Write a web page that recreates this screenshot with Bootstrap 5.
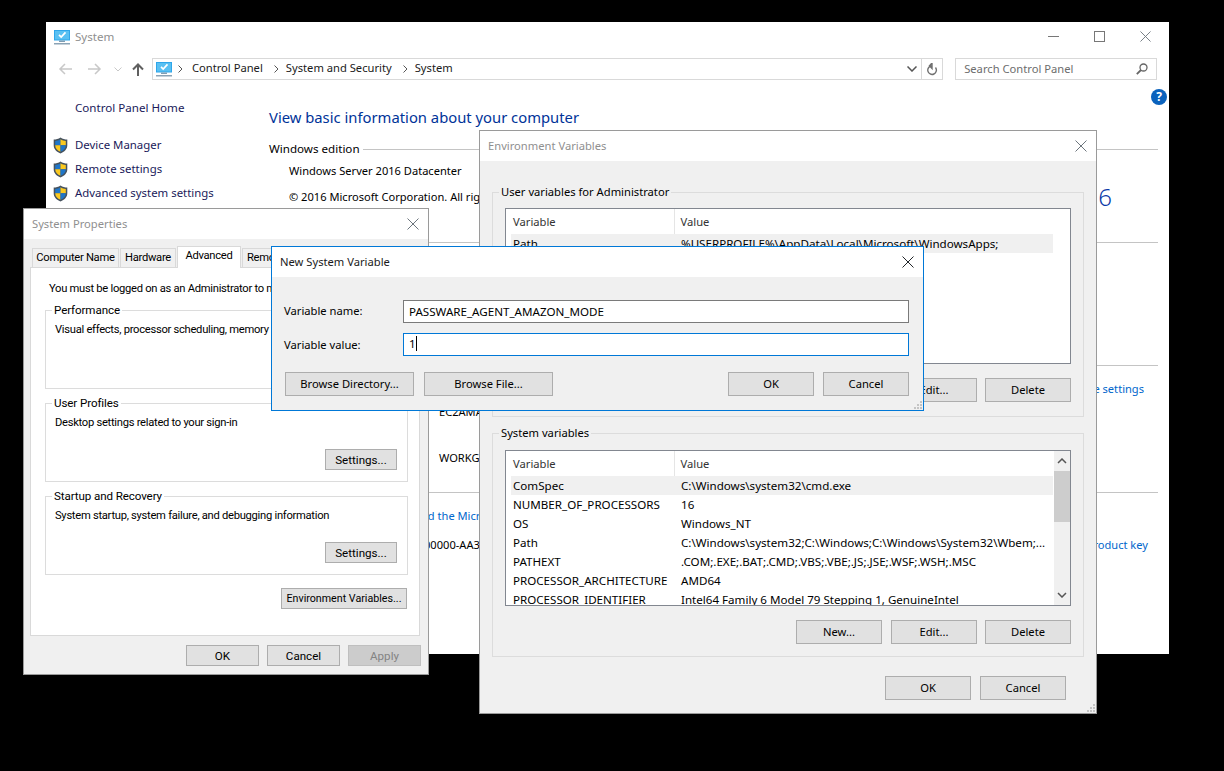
<!DOCTYPE html>
<html lang="en">

<head>
    <meta charset="UTF-8">
    <meta name="viewport" content="width=device-width, initial-scale=1.0">
    <title>System - Environment Variables</title>
    <link href="https://cdn.jsdelivr.net/npm/bootstrap@5.3.0/dist/css/bootstrap.min.css" rel="stylesheet">
    <style>
        html, body { height: 100%; }

        body {
            margin: 0;
            background-color: #000;
            overflow: hidden;
            color: #000;
            font-family: "Noto Sans", "Open Sans", sans-serif;
            font-size: 11.6px;
            line-height: 16px;
        }

        /* windows on the desktop */
        .win {
            position: absolute;
            display: flex;
            flex-direction: column;
            background-color: #fff;
            overflow: hidden;
        }

        .win-system { left: 46px; top: 22px; width: 1123px; height: 632px; z-index: 1; }
        .win-env { left: 479px; top: 130px; width: 618px; height: 584px; border: 1px solid #9a9a9a; z-index: 2; }
        .win-props { left: 23px; top: 208px; width: 406px; height: 467px; border: 1px solid #9a9a9a; z-index: 3; }
        .win-new { left: 271px; top: 246px; width: 653px; height: 165px; border: 1px solid #0078d7; z-index: 4; }

        .win-head {
            flex: 0 0 30px;
            display: flex;
            align-items: center;
            justify-content: space-between;
            padding: 0 8px;
            color: #8f8f8f;
            font-size: 11.2px;
        }

        .win-new .win-head { color: #1a1a1a; }
        .win-body { flex: 1 1 auto; min-height: 0; background-color: #f0f0f0; display: flex; flex-direction: column; }

        .x-icon { display: block; margin-right: 1px; }

        /* plain windows buttons */
        .btn.w-btn {
            width: 86px;
            height: 24px;
            padding: 0;
            border: 1px solid #adadad;
            border-radius: 0;
            background-color: #e1e1e1;
            color: #000;
            font-size: 11.2px;
            line-height: 20px;
            white-space: nowrap;
        }

        .btn.w-btn.sm { width: 73px; height: 21px; line-height: 18px; font-size: 11.6px; }
        .btn.w-btn.off { background-color: #cccccc; border-color: #bfbfbf; color: #838383; opacity: 1; }

        /* group boxes */
        fieldset.grp { border: 1px solid #dcdcdc; display: flex; flex-direction: column; flex: none; }
        fieldset.grp legend {
            float: none;
            width: auto;
            margin: 0 0 0 -6px;
            padding: 0 2px;
            font-size: 11.2px;
            line-height: 16px;
        }

        /* system window */
        .sys-head { flex: 0 0 30px; display: flex; align-items: center; padding: 0 18px 0 8px; color: #8f8f8f; }
        .sys-head .sys-name { margin-left: 5px; flex-grow: 1; }
        .caption-btns { display: flex; align-items: center; gap: 35px; margin-top: -1px; }

        .tool-row { flex: 0 0 28px; display: flex; padding: 6px 12px 0 8px; }
        .tool-arrows { width: 98px; display: flex; align-items: center; color: #c8c8c8; }
        .arrow-down { margin-left: 12px; }
        .arrow-up { margin-left: 10px; }
        .addr-box, .find-box { height: 22px; border: 1px solid #d9d9d9; display: flex; align-items: center; font-size: 11.2px; }
        .addr-box { width: 792px; }
        .addr-box .pc-icon { margin: 0 6px 0 3px; }
        .addr-box .crumb { margin: 0 11px 2px 0; color: #1a1a1a; white-space: nowrap; }
        .addr-box .chev { margin: 0 7px 1px 0; }
        .addr-box .chev.first { margin-right: 9px; }
        .addr-end { margin-left: auto; display: flex; align-items: center; height: 100%; }
        .addr-refresh { width: 21px; height: 100%; border-left: 1px solid #d9d9d9; display: flex; align-items: center; justify-content: center; }
        .find-box { width: 202px; margin-left: 12px; padding: 0 8px; color: #6d6d6d; justify-content: space-between; }

        .sys-main { flex: 1 1 auto; display: flex; min-height: 0; position: relative; padding-top: 16px; }
        .side-col { flex: 0 0 223px; font-size: 11.4px; }
        .side-home { line-height: 24px; padding-left: 29px; color: #1a1a5a; font-size: 11.6px; }
        .side-link { height: 24px; display: flex; align-items: center; padding-left: 7px; gap: 7px; color: #1a1a5a; }
        .side-links { margin-top: 13px; }
        .info-col { flex: 1 1 auto; padding-right: 11px; min-width: 0; }
        .info-title { font-size: 14.8px; line-height: 24px; color: #003399; margin: 9px 0 10px; }
        .info-sec { display: flex; flex-direction: column; }
        .sec-edition { height: 93px; }
        .sec-system { height: 123px; }
        .sec-name { height: 127px; }
        .sec-head { height: 20px; display: flex; align-items: center; gap: 3px; white-space: nowrap; flex: none; }
        .sec-head::after { content: ""; flex-grow: 1; height: 1px; background-color: #c4c4c4; margin-top: 1px; }
        .info-line { padding-left: 20px; height: 24px; display: flex; align-items: center; white-space: nowrap; font-size: 11.1px; }
        .info-line.copy-line { margin-top: 2px; }
        .info-line.name-row { height: 23px; }
        .info-line.name-row.first { margin-top: 2px; }
        .info-line.terms-row { margin-top: 2px; }
        .info-line.terms-row .blue-link { margin-left: 5px; }
        .info-line.key-row { margin-top: 5px; padding-left: 23px; }
        .info-label { width: 150px; flex: none; }
        .brand-text { margin-left: auto; margin-right: 48.5px; font-size: 24px; font-weight: 300; color: #0a3aa8; letter-spacing: -2.5px; }
        .blue-link { color: #0066cc; }
        .far-end { margin-left: auto; margin-right: 14px; }
        .key-row .far-end { margin-right: 10px; }
        .help-dot {
            position: absolute;
            right: 2px;
            top: 9px;
            width: 16px;
            height: 16px;
            border-radius: 50%;
            background-color: #0a62bd;
            color: #fff;
            font-weight: 700;
            font-size: 12px;
            line-height: 16px;
            text-align: center;
        }

        /* environment variables */
        .env-body { padding: 23px 12px 0 12px; }
        .grp-user { height: 233px; padding: 0 12px 0 12px; margin-bottom: 8px; }
        .grp-sys { height: 232px; padding: 0 12px 0 12px; }
        .var-box {
            margin-top: 8px;
            flex: 0 0 156px;
            display: flex;
            border: 1px solid #828790;
            background-color: #fff;
            padding-left: 5px;
            overflow: hidden;
        }
        .grp-sys .var-box { margin-top: 9px; }
        .var-table.table { width: 542px; flex: none; table-layout: fixed; margin: 0; align-self: flex-start; font-size: 11.6px; }
        .var-table.table > :not(caption) > * > * { padding: 0 0 0 2px; height: 19px; line-height: 16px; white-space: nowrap; overflow: hidden; border: 0; box-shadow: none; background: none; color: #000; vertical-align: middle; }
        .var-table.table > thead > tr > th { height: 25px; font-weight: 400; color: #333; font-size: 11.2px; }
        .var-table.table > thead > tr > th:first-child { width: 163px; }
        .var-table.table > thead > tr > th:nth-child(2) { border-left: 1px solid #e5e5e5; padding-left: 6px; }
        .var-table.table > tbody > tr > td:nth-child(2) { padding-left: 7px; }
        .var-table.table > tbody > tr.picked > td { background-color: #f0f0f0; }
        .var-scroll { flex: 0 0 16px; margin-left: 1px; background-color: #f0f0f0; display: flex; flex-direction: column; align-items: center; }
        .var-scroll .thumb { width: 100%; height: 51px; background-color: #cdcdcd; }
        .var-scroll svg { flex: none; margin: 7px 0; }
        .var-scroll .mid { flex-grow: 1; }
        .grp-btns { display: flex; justify-content: flex-end; gap: 8px; margin-top: auto; }
        .env-btns { margin: 14px 0 0 0; }
        .env-btns .btn:first-child { margin-right: 1px; }
        .env-foot { display: flex; justify-content: flex-end; gap: 9px; padding: 19px 18px 0 0; }
        .grip { position: absolute; right: 1px; bottom: 1px; }

        /* system properties, the old dialog font runs narrower */
        .win-props .win-body { font-family: Roboto, sans-serif; font-size: 11.2px; letter-spacing: -.28px; }
        .props-body { padding: 9px 9px 8px 6px; }
        .nav.prop-tabs { flex-wrap: nowrap; margin-left: 2px; border: 0; height: 19px; position: relative; z-index: 1; }
        .nav.prop-tabs .nav-link {
            height: 19px;
            padding: 0;
            margin: 0 1px 0 0;
            background-color: #f0f0f0;
            border: 1px solid #d9d9d9;
            border-bottom: 0;
            border-radius: 0;
            color: #000;
            font-size: 11.2px;
            line-height: 18px;
            text-align: center;
            white-space: nowrap;
        }
        .nav.prop-tabs .nav-item:nth-child(1) .nav-link { width: 87px; }
        .nav.prop-tabs .nav-item:nth-child(2) .nav-link { width: 56px; }
        .nav.prop-tabs .nav-item:nth-child(3) .nav-link { width: 64px; }
        .nav.prop-tabs .nav-item:nth-child(4) .nav-link { width: 56px; text-align: left; padding-left: 4px; }
        .nav.prop-tabs .nav-link.active { background-color: #fff; height: 22px; margin-top: -2px; line-height: 17px; }
        .prop-panel { height: 370px; width: 390px; border: 1px solid #d9d9d9; background-color: #fff; padding: 13px 11px 0 14px; }
        .prop-note { line-height: 16px; margin-left: 4px; margin-bottom: 6px; white-space: nowrap; }
        .prop-grp { height: 86px; padding: 4px 10px 11px 9px; margin-bottom: 7px; }
        fieldset.prop-grp legend { font-size: 11.6px; letter-spacing: -.1px; margin-left: -3px; line-height: 15px; }
        .prop-grp .grp-text { white-space: nowrap; }
        .prop-grp .btn.w-btn.sm { width: 72px; }
        .prop-env { display: flex; justify-content: flex-end; margin: 13px 1px 0 0; }
        .btn.w-btn.sm.env-btn { width: 126px; font-size: 10.7px; }
        .props-foot { display: flex; justify-content: flex-end; gap: 8px; padding-top: 9px; margin-right: -2px; }

        /* new variable dialog */
        .new-body { padding: 23px 14px 0 12px; position: relative; }
        .new-row { display: flex; align-items: center; margin-bottom: 10px; }
        .new-label { width: 119px; flex: none; font-size: 11.2px; padding-bottom: 1px; }
        .new-row + .new-row .new-label { padding-bottom: 0; }
        .form-control.var-input {
            height: 23px;
            padding: 0 5px;
            border: 1px solid #7a7a7a;
            border-radius: 0;
            font-size: 11.6px;
            line-height: 20px;
            color: #000;
            box-shadow: none;
        }
        .form-control.var-input.is-on { border-color: #0078d7; }
        .text-caret { display: inline-block; width: 1px; height: 15px; background-color: #000; vertical-align: -3px; }
        .new-btns { display: flex; margin-top: 6px; margin-left: 1px; }
        .btn.w-btn.wide { width: 129px; margin-right: 10px; }
        .new-btns .btn-ok { margin-left: auto; margin-right: 9px; }
    </style>
</head>

<body>

    <svg width="0" height="0" class="position-absolute">
        <symbol id="pc" viewBox="0 0 16 15">
            <rect x="0" y="0" width="16" height="10.5" fill="#2ea6ea"/>
            <rect x="1" y="1" width="14" height="8.5" fill="#59c0f2"/>
            <path d="M5 4.8 7.2 7 11.5 2.4" fill="none" stroke="#fff" stroke-width="1.7"/>
            <rect x="5" y="10.5" width="6" height="1.5" fill="#7f9db3"/>
            <rect x="0" y="13" width="16" height="1.5" fill="#8ba3b5"/>
        </symbol>
        <symbol id="shield" viewBox="0 0 15 17">
            <path d="M7.5.5C5.5 2 3 2.6.7 2.6v5.6c0 3.8 2.8 6.6 6.8 8.3 4-1.7 6.8-4.5 6.8-8.3V2.6C12 2.6 9.500 2 7.500.5z" fill="#46525e"/>
            <path d="M7.500 2.200C5.900 3.200 4 3.800 2.200 3.900v4.300h5.300z" fill="#1f76c9"/>
            <path d="M7.500 2.200c1.600 1 3.500 1.600 5.300 1.700v4.300H7.500z" fill="#fbc91f"/>
            <path d="M2.200 8.200h5.300v6.600c-3-1.400-5.300-3.500-5.300-6.600z" fill="#fbc91f"/>
            <path d="M12.800 8.200H7.500v6.600c3-1.400 5.300-3.500 5.300-6.600z" fill="#1f76c9"/>
        </symbol>
        <symbol id="cross" viewBox="0 0 12 12">
            <path d="M.5.500l11 11M11.500.500l-11 11" fill="none" stroke="currentColor"/>
        </symbol>
        <symbol id="grip" viewBox="0 0 8 8">
            <path d="M6 0h2v2H6zM3 3h2v2H3zM6 3h2v2H6zM0 6h2v2H0zM3 6h2v2H3zM6 6h2v2H6z" fill="#c4c4c4"/>
        </symbol>
    </svg>

    <!-- Control panel window, sits at the back -->
    <div class="win win-system">
        <div class="sys-head">
            <svg width="16" height="15"><use href="#pc"/></svg>
            <span class="sys-name">System</span>
            <div class="caption-btns">
                <svg width="11" height="11"><path d="M0 5.500h11" stroke="#777"/></svg>
                <svg width="11" height="11"><rect x=".5" y=".5" width="10" height="10" fill="none" stroke="#777"/></svg>
                <svg width="11" height="11" class="text-secondary"><use href="#cross"/></svg>
            </div>
        </div>
        <div class="tool-row">
            <div class="tool-arrows">
                <svg width="14" height="12" class="ms-1"><path d="M14 6H2M7 1 2 6l5 5" fill="none" stroke="#c8c8c8" stroke-width="1.5"/></svg>
                <svg width="14" height="12" class="ms-3"><path d="M0 6h12M7 1l5 5-5 5" fill="none" stroke="#c8c8c8" stroke-width="1.5"/></svg>
                <svg width="8" height="5" class="arrow-down"><path d="M.5.500 4 4 7.500.500" fill="none" stroke="#c8c8c8"/></svg>
                <svg width="12" height="13" class="arrow-up"><path d="M6 13V2M1 6.500 6 1.500l5 5" fill="none" stroke="#606060" stroke-width="2"/></svg>
            </div>
            <div class="addr-box">
                <svg width="16" height="15" class="pc-icon"><use href="#pc"/></svg>
                <svg class="chev first" width="5" height="8"><path d="M.5.500 4 4 .5 7.500" fill="none" stroke="#555"/></svg>
                <span class="crumb">Control Panel</span>
                <svg class="chev" width="5" height="8"><path d="M.5.500 4 4 .5 7.500" fill="none" stroke="#555"/></svg>
                <span class="crumb">System and Security</span>
                <svg class="chev" width="5" height="8"><path d="M.5.500 4 4 .5 7.500" fill="none" stroke="#555"/></svg>
                <span class="crumb">System</span>
                <div class="addr-end">
                    <svg width="10" height="6" class="me-1"><path d="M.5.500 5 5 9.500.500" fill="none" stroke="#555" stroke-width="1.500"/></svg>
                    <div class="addr-refresh">
                        <svg width="12" height="13"><path d="M9.500 4.500a4.300 4.300 0 1 1-3.500-1.700M6 0v5.500L3.500 2.800z" fill="none" stroke="#707070" stroke-width="1.400"/></svg>
                    </div>
                </div>
            </div>
            <div class="find-box">
                <span>Search Control Panel</span>
                <svg width="12" height="12"><circle cx="7.500" cy="4.500" r="3.500" fill="none" stroke="#666" stroke-width="1.300"/><path d="M5 7 .8 11.200" stroke="#666" stroke-width="1.800"/></svg>
            </div>
        </div>
        <div class="sys-main">
            <div class="help-dot">?</div>
            <div class="side-col">
                <div class="side-home">Control Panel Home</div>
                <div class="side-links">
                    <div class="side-link"><svg width="15" height="17"><use href="#shield"/></svg>Device Manager</div>
                    <div class="side-link"><svg width="15" height="17"><use href="#shield"/></svg>Remote settings</div>
                    <div class="side-link"><svg width="15" height="17"><use href="#shield"/></svg>Advanced system settings</div>
                </div>
            </div>
            <div class="info-col">
                <div class="info-title">View basic information about your computer</div>
                <div class="info-sec sec-edition">
                    <div class="sec-head">Windows edition</div>
                    <div class="info-line">Windows Server 2016 Datacenter</div>
                    <div class="info-line copy-line">© 2016 Microsoft Corporation. All rights reserved.<span class="brand-text">Windows Server® 2016</span></div>
                </div>
                <div class="info-sec sec-system">
                    <div class="sec-head">System</div>
                </div>
                <div class="info-sec sec-name">
                    <div class="sec-head">Computer name, domain, and workgroup settings</div>
                    <div class="info-line name-row first"><span class="info-label">Computer name:</span>EC2AMAZ<span class="blue-link far-end">Change settings</span></div>
                    <div class="info-line name-row"><span class="info-label">Full computer name:</span>EC2AMAZ</div>
                    <div class="info-line name-row"><span class="info-label">Computer description:</span></div>
                    <div class="info-line name-row"><span class="info-label">Workgroup:</span>WORKGROUP</div>
                </div>
                <div class="info-sec">
                    <div class="sec-head">Windows activation</div>
                    <div class="info-line terms-row">Windows is activated&nbsp;&nbsp;<span class="blue-link">Read the Microsoft Software License Terms</span></div>
                    <div class="info-line key-row">Product ID: 00376-50000-00000-AA3<span class="blue-link far-end">Change product key</span></div>
                </div>
            </div>
        </div>
    </div>

    <!-- Environment Variables -->
    <div class="win win-env">
        <div class="win-head">
            <span>Environment Variables</span>
            <svg width="12" height="12" class="x-icon text-secondary"><use href="#cross"/></svg>
        </div>
        <div class="win-body env-body">
            <fieldset class="grp grp-user">
                <legend>User variables for Administrator</legend>
                <div class="var-box">
                    <table class="table var-table">
                        <thead><tr><th>Variable</th><th>Value</th></tr></thead>
                        <tbody>
                            <tr class="picked"><td>Path</td><td>%USERPROFILE%\AppData\Local\Microsoft\WindowsApps;</td></tr>
                        </tbody>
                    </table>
                </div>
                <div class="grp-btns env-btns">
                    <button class="btn w-btn">New...</button>
                    <button class="btn w-btn">Edit...</button>
                    <button class="btn w-btn">Delete</button>
                </div>
            </fieldset>
            <fieldset class="grp grp-sys">
                <legend>System variables</legend>
                <div class="var-box">
                    <table class="table var-table">
                        <thead><tr><th>Variable</th><th>Value</th></tr></thead>
                        <tbody>
                            <tr class="picked"><td>ComSpec</td><td>C:\Windows\system32\cmd.exe</td></tr>
                            <tr><td>NUMBER_OF_PROCESSORS</td><td>16</td></tr>
                            <tr><td>OS</td><td>Windows_NT</td></tr>
                            <tr><td>Path</td><td>C:\Windows\system32;C:\Windows;C:\Windows\System32\Wbem;...</td></tr>
                            <tr><td>PATHEXT</td><td>.COM;.EXE;.BAT;.CMD;.VBS;.VBE;.JS;.JSE;.WSF;.WSH;.MSC</td></tr>
                            <tr><td>PROCESSOR_ARCHITECTURE</td><td>AMD64</td></tr>
                            <tr><td>PROCESSOR_IDENTIFIER</td><td>Intel64 Family 6 Model 79 Stepping 1, GenuineIntel</td></tr>
                        </tbody>
                    </table>
                    <div class="var-scroll">
                        <svg width="10" height="6"><path d="M1 5 5 1l4 4" fill="none" stroke="#555" stroke-width="1.500"/></svg>
                        <div class="thumb"></div>
                        <div class="mid"></div>
                        <svg width="10" height="6"><path d="M1 1l4 4 4-4" fill="none" stroke="#555" stroke-width="1.500"/></svg>
                    </div>
                </div>
                <div class="grp-btns env-btns">
                    <button class="btn w-btn">New...</button>
                    <button class="btn w-btn">Edit...</button>
                    <button class="btn w-btn">Delete</button>
                </div>
            </fieldset>
            <div class="env-foot">
                <button class="btn w-btn">OK</button>
                <button class="btn w-btn">Cancel</button>
            </div>
            <svg class="grip" width="8" height="8"><use href="#grip"/></svg>
        </div>
    </div>

    <!-- System Properties -->
    <div class="win win-props">
        <div class="win-head">
            <span>System Properties</span>
            <svg width="12" height="12" class="x-icon text-secondary"><use href="#cross"/></svg>
        </div>
        <div class="win-body props-body">
            <ul class="nav prop-tabs">
                <li class="nav-item"><a class="nav-link" href="#">Computer Name</a></li>
                <li class="nav-item"><a class="nav-link" href="#">Hardware</a></li>
                <li class="nav-item"><a class="nav-link active" href="#">Advanced</a></li>
                <li class="nav-item"><a class="nav-link" href="#">Remote</a></li>
            </ul>
            <div class="prop-panel">
                <div class="prop-note">You must be logged on as an Administrator to make most of these changes.</div>
                <fieldset class="grp prop-grp">
                    <legend>Performance</legend>
                    <div class="grp-text">Visual effects, processor scheduling, memory usage, and virtual memory</div>
                    <div class="grp-btns"><button class="btn w-btn sm">Settings...</button></div>
                </fieldset>
                <fieldset class="grp prop-grp">
                    <legend>User Profiles</legend>
                    <div class="grp-text">Desktop settings related to your sign-in</div>
                    <div class="grp-btns"><button class="btn w-btn sm">Settings...</button></div>
                </fieldset>
                <fieldset class="grp prop-grp">
                    <legend>Startup and Recovery</legend>
                    <div class="grp-text">System startup, system failure, and debugging information</div>
                    <div class="grp-btns"><button class="btn w-btn sm">Settings...</button></div>
                </fieldset>
                <div class="prop-env"><button class="btn w-btn sm env-btn">Environment Variables...</button></div>
            </div>
            <div class="props-foot">
                <button class="btn w-btn sm">OK</button>
                <button class="btn w-btn sm">Cancel</button>
                <button class="btn w-btn sm off">Apply</button>
            </div>
        </div>
    </div>

    <!-- New System Variable dialog, on top -->
    <div class="win win-new">
        <div class="win-head">
            <span>New System Variable</span>
            <svg width="12" height="12" class="x-icon text-dark"><use href="#cross"/></svg>
        </div>
        <div class="win-body new-body">
            <div class="new-row">
                <span class="new-label">Variable name:</span>
                <input type="text" class="form-control var-input" value="PASSWARE_AGENT_AMAZON_MODE">
            </div>
            <div class="new-row">
                <span class="new-label">Variable value:</span>
                <div class="form-control var-input is-on">1<span class="text-caret"></span></div>
            </div>
            <div class="new-btns">
                <button class="btn w-btn wide">Browse Directory...</button>
                <button class="btn w-btn wide">Browse File...</button>
                <button class="btn w-btn btn-ok">OK</button>
                <button class="btn w-btn">Cancel</button>
            </div>
            <svg class="grip" width="8" height="8"><use href="#grip"/></svg>
        </div>
    </div>

    <script src="https://cdn.jsdelivr.net/npm/bootstrap@5.3.0/dist/js/bootstrap.bundle.min.js"></script>
</body>

</html>
